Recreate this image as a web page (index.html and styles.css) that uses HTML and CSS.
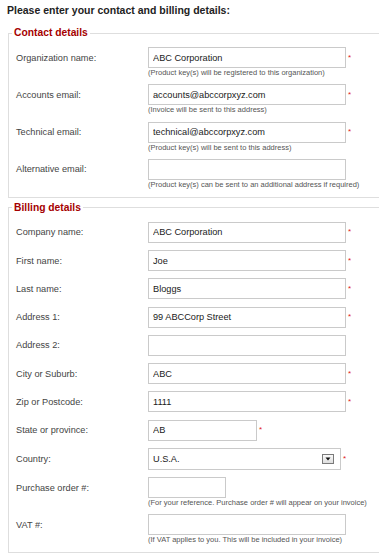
FILE: index.html
```html
<!DOCTYPE html>
<html lang="en">
<head>
  <meta charset="UTF-8">
  <meta name="viewport" content="width=device-width, initial-scale=1.0">
  <title>Contact and billing details</title>
  <link rel="stylesheet" href="styles.css">
</head>
<body>
  <h1 class="page-title">Please enter your contact and billing details:</h1>

  <form class="details-form">
    <fieldset class="group">
      <legend>Contact details</legend>

      <div class="row">
        <label for="orgName">Organization name:</label>
        <div class="field">
          <input class="text" type="text" id="orgName" value="ABC Corporation">
          <span class="req">*</span>
        </div>
        <p class="hint">(Product key(s) will be registered to this organization)</p>
      </div>

      <div class="row">
        <label for="accountsEmail">Accounts email:</label>
        <div class="field">
          <input class="text" type="text" id="accountsEmail" value="accounts@abccorpxyz.com">
          <span class="req">*</span>
        </div>
        <p class="hint">(Invoice will be sent to this address)</p>
      </div>

      <div class="row">
        <label for="techEmail">Technical email:</label>
        <div class="field">
          <input class="text" type="text" id="techEmail" value="technical@abccorpxyz.com">
          <span class="req">*</span>
        </div>
        <p class="hint">(Product key(s) will be sent to this address)</p>
      </div>

      <div class="row">
        <label for="altEmail">Alternative email:</label>
        <div class="field">
          <input class="text" type="text" id="altEmail" value="">
        </div>
        <p class="hint">(Product key(s) can be sent to an additional address if required)</p>
      </div>
    </fieldset>

    <fieldset class="group">
      <legend>Billing details</legend>

      <div class="row">
        <label for="company">Company name:</label>
        <div class="field">
          <input class="text" type="text" id="company" value="ABC Corporation">
          <span class="req">*</span>
        </div>
      </div>

      <div class="row">
        <label for="firstName">First name:</label>
        <div class="field">
          <input class="text" type="text" id="firstName" value="Joe">
          <span class="req">*</span>
        </div>
      </div>

      <div class="row">
        <label for="lastName">Last name:</label>
        <div class="field">
          <input class="text" type="text" id="lastName" value="Bloggs">
          <span class="req">*</span>
        </div>
      </div>

      <div class="row">
        <label for="address1">Address 1:</label>
        <div class="field">
          <input class="text" type="text" id="address1" value="99 ABCCorp Street">
          <span class="req">*</span>
        </div>
      </div>

      <div class="row">
        <label for="address2">Address 2:</label>
        <div class="field">
          <input class="text" type="text" id="address2" value="">
        </div>
      </div>

      <div class="row">
        <label for="city">City or Suburb:</label>
        <div class="field">
          <input class="text" type="text" id="city" value="ABC">
          <span class="req">*</span>
        </div>
      </div>

      <div class="row">
        <label for="zip">Zip or Postcode:</label>
        <div class="field">
          <input class="text" type="text" id="zip" value="1111">
          <span class="req">*</span>
        </div>
      </div>

      <div class="row">
        <label for="state">State or province:</label>
        <div class="field">
          <input class="text text-short" type="text" id="state" value="AB">
          <span class="req">*</span>
        </div>
      </div>

      <div class="row">
        <label for="country">Country:</label>
        <div class="field">
          <div class="select-wrap">
            <select id="country">
              <option>U.S.A.</option>
            </select>
            <svg class="select-btn" width="12" height="10" viewBox="0 0 12 10">
              <defs>
                <linearGradient id="btnFill" x1="0" y1="0" x2="0" y2="1">
                  <stop offset="0" stop-color="#fbfbfb"/>
                  <stop offset="1" stop-color="#dcdcdc"/>
                </linearGradient>
              </defs>
              <rect x="0.5" y="0.5" width="11" height="9" fill="url(#btnFill)" stroke="#7a7a7a"/>
              <path d="M3.5 3.5 L8.5 3.5 L6 6.5 Z" fill="#111"/>
            </svg>
          </div>
          <span class="req">*</span>
        </div>
      </div>

      <div class="row">
        <label for="poNumber">Purchase order #:</label>
        <div class="field">
          <input class="text text-tiny" type="text" id="poNumber" value="">
        </div>
        <p class="hint">(For your reference. Purchase order # will appear on your invoice)</p>
      </div>

      <div class="row">
        <label for="vatNumber">VAT #:</label>
        <div class="field">
          <input class="text" type="text" id="vatNumber" value="">
        </div>
        <p class="hint">(If VAT applies to you. This will be included in your invoice)</p>
      </div>
    </fieldset>
  </form>
</body>
</html>
```

FILE: styles.css
```css
body {
  margin: 0;
  padding: 0 0 0 7px;
  font-family: 'Liberation Sans', Arial, sans-serif;
  color: #444;
  background: #fff;
}

.page-title {
  margin: 4px 0 0;
  font-size: 10.5px;
  line-height: 12px;
  font-weight: bold;
  color: #222;
}

.details-form {
  margin: 0;
}

/* the boxes run off the right edge, so no right border */
.group {
  min-width: 0;
  margin: 11px 0 0 1px;
  padding: 8px 7px 8px 7px;
  border: 1px solid #dedede;
  border-right: none;
}

.group + .group {
  margin-top: 4px;
}

.group legend {
  margin-left: -4px;
  padding: 0 2px;
  font-size: 10.3px;
  line-height: 12px;
  font-weight: bold;
  color: #a50000;
}

.row {
  display: grid;
  grid-template-columns: 132px auto;
  margin-bottom: 7.25px;
}

.row:last-child {
  margin-bottom: 0;
}

.row label {
  align-self: center;
  font-size: 9.2px;
  color: #444;
}

.field {
  display: flex;
  align-items: center;
}

.text {
  width: 198px;
  height: 21px;
  margin: 0;
  padding: 0 4px;
  box-sizing: border-box;
  border: 1px solid #cacaca;
  border-radius: 0;
  font-family: 'Liberation Sans', Arial, sans-serif;
  font-size: 9.2px;
  color: #1a1a1a;
  background: #fff;
  outline: none;
}

.text-short {
  width: 109px;
}

.text-tiny {
  width: 78px;
}

.select-wrap {
  position: relative;
  width: 193px;
  height: 22px;
}

.select-wrap select {
  appearance: none;
  -webkit-appearance: none;
  width: 100%;
  height: 22px;
  margin: 0;
  padding: 0 4px;
  box-sizing: border-box;
  border: 1px solid #cacaca;
  border-radius: 0;
  font-family: 'Liberation Sans', Arial, sans-serif;
  font-size: 9.2px;
  color: #1a1a1a;
  background: #fff;
}

.select-btn {
  position: absolute;
  right: 7px;
  top: 6px;
}

.req {
  margin-left: 2px;
  font-size: 8px;
  line-height: 8px;
  color: #e02020;
}

.hint {
  grid-column: 2;
  margin: 0;
  font-size: 7.5px;
  line-height: 9px;
  color: #555;
}
```
